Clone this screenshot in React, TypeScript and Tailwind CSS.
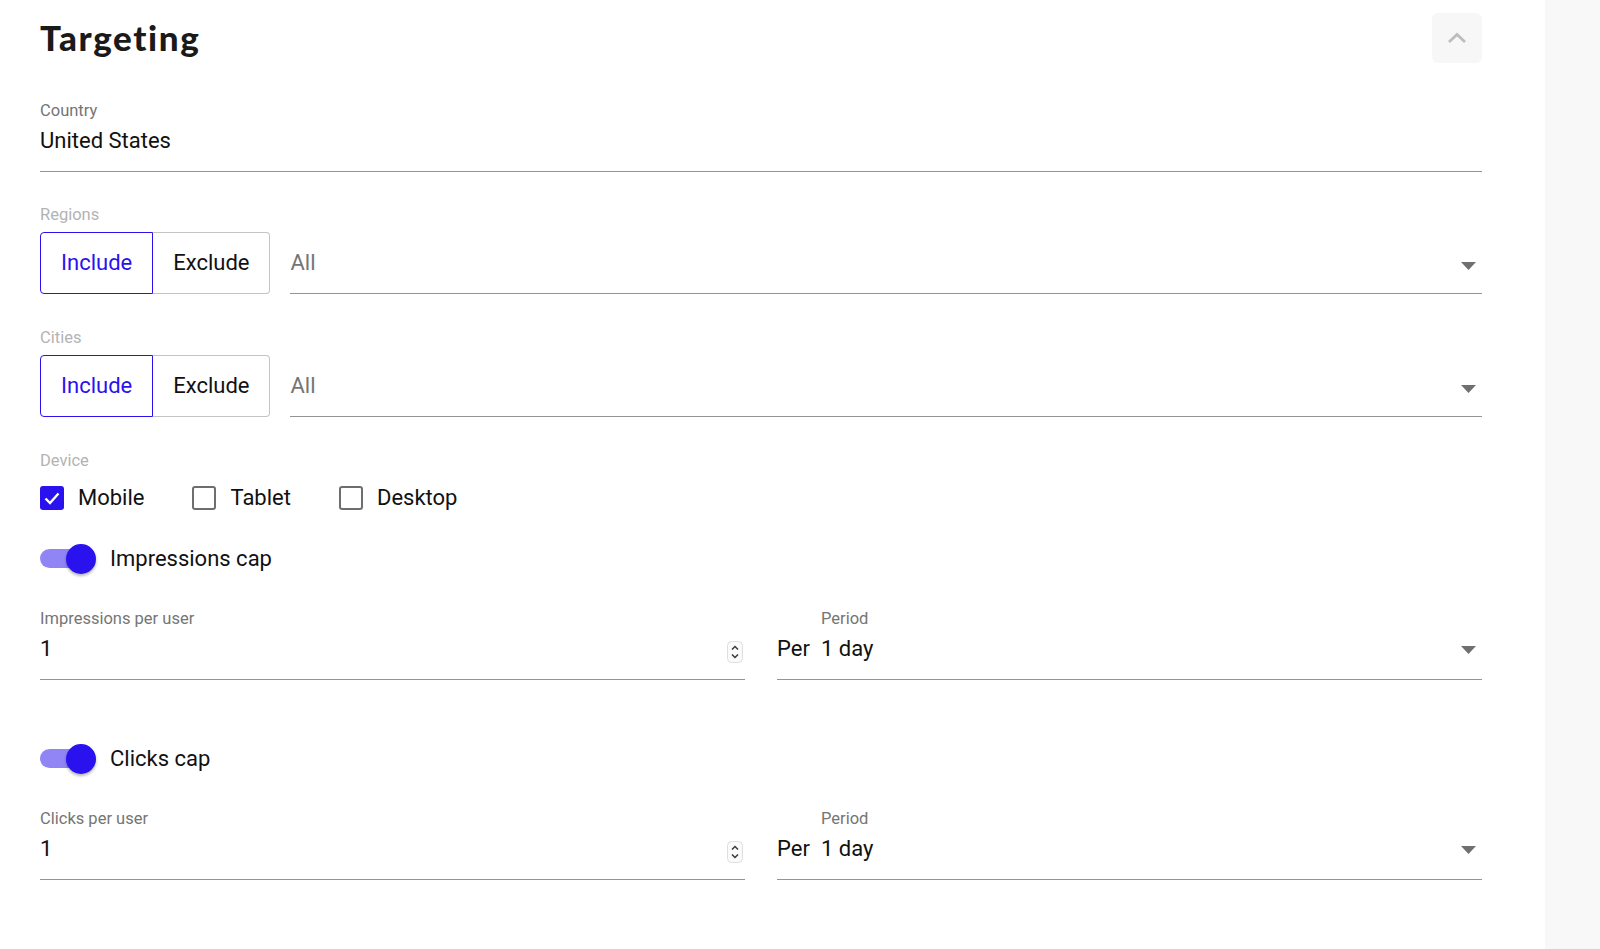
import React from "react";

const PRIMARY_TEXT = "text-[#2a12ef]";

function DropArrow() {
  return (
    <svg width="15" height="8" viewBox="0 0 15 8" className="shrink-0">
      <polygon points="0,0 15,0 7.5,8" fill="#6f6f6f" />
    </svg>
  );
}

function Spinner() {
  return (
    <svg width="16" height="22" viewBox="0 0 16 22" className="shrink-0">
      <rect x="0.5" y="0.5" width="15" height="21" rx="4" fill="#fafafa" stroke="#dedede" />
      <path d="M5 8.5 L8 5.5 L11 8.5" fill="none" stroke="#333" strokeWidth="1.4" />
      <path d="M5 13.5 L8 16.5 L11 13.5" fill="none" stroke="#333" strokeWidth="1.4" />
    </svg>
  );
}

function IncludeExclude() {
  return (
    <div className="flex mt-[8px] items-end">
      <div className="flex shrink-0">
        <div className={`border border-[#2a12ef] rounded-l-[4px] px-[20px] py-[17px] text-[22px] leading-[26px] ${PRIMARY_TEXT}`}>
          Include
        </div>
        <div className="border border-l-0 border-[#c4c4c4] rounded-r-[4px] px-[20px] py-[17px] text-[22px] leading-[26px] text-[#111]">
          Exclude
        </div>
      </div>
      <div className="flex-1 ml-[20px] h-[62px] border-b border-[#949494] flex items-center justify-between">
        <span className="text-[22px] leading-[26px] text-[#757575]">All</span>
        <span className="mr-[6px] mt-[6px] flex">
          <DropArrow />
        </span>
      </div>
    </div>
  );
}

function Checkbox({ checked, label }: { checked: boolean; label: string }) {
  return (
    <div className="flex items-center gap-[14px]">
      {checked ? (
        <div className="w-[24px] h-[24px] rounded-[3px] bg-[#2a12ef] flex items-center justify-center">
          <svg width="24" height="24" viewBox="0 0 24 24">
            <path d="M5.5 12.5 L10 17 L18.5 7.5" fill="none" stroke="#fff" strokeWidth="2.4" />
          </svg>
        </div>
      ) : (
        <div className="w-[24px] h-[24px] rounded-[3px] border-[2.5px] border-[#6e6e6e] bg-white" />
      )}
      <span className="text-[22px] leading-[26px] text-[#111]">{label}</span>
    </div>
  );
}

function Switch({ label }: { label: string }) {
  return (
    <div className="flex items-center gap-[13px]">
      <div className="relative w-[57px] h-[30px] shrink-0">
        <div className="absolute left-0 top-[5.5px] w-[51px] h-[19px] rounded-full bg-[#9185f6]" />
        <div className="absolute left-[26px] top-0 w-[30px] h-[30px] rounded-full bg-[#2a12ef] shadow-[0_2px_3px_rgba(0,0,0,0.3)]" />
      </div>
      <span className="text-[22px] leading-[26px] text-[#111]">{label}</span>
    </div>
  );
}

function NumberField({ label, value }: { label: string; value: string }) {
  return (
    <div className="border-b border-[#949494] pb-[17px]">
      <div className="text-[16.5px] leading-[19px] text-[#757575]">{label}</div>
      <div className="mt-[8px] h-[26px] flex items-center justify-between">
        <span className="text-[22px] leading-[26px] text-[#111]">{value}</span>
        <span className="mr-[2px] mt-[6px] flex">
          <Spinner />
        </span>
      </div>
    </div>
  );
}

function PeriodField() {
  return (
    <div className="border-b border-[#949494] pb-[17px]">
      <div className="ml-[44px] text-[16.5px] leading-[19px] text-[#757575]">Period</div>
      <div className="mt-[8px] h-[26px] flex items-center justify-between">
        <div className="flex text-[22px] leading-[26px] text-[#111]">
          <span className="w-[44px]">Per</span>
          <span>1 day</span>
        </div>
        <span className="mr-[6px] mt-[2px] flex">
          <DropArrow />
        </span>
      </div>
    </div>
  );
}

export default function App() {
  return (
    <div className="flex min-h-[949px] bg-white font-['Roboto',sans-serif]">
      <div className="w-[1545px] shrink-0 pl-[40px] pr-[63px]">
        <div className="flex items-center justify-between pt-[13px]">
          <h1 className="font-['Lato',sans-serif] font-black text-[35px] leading-[40px] -mt-[2px] text-[#1a1a1a] tracking-[1.6px]">
            Targeting
          </h1>
          <div className="w-[50px] h-[50px] rounded-[6px] bg-[#f7f7f7] flex items-center justify-center">
            <svg width="20" height="12" viewBox="0 0 20 12">
              <path d="M2 10 L10 2.5 L18 10" fill="none" stroke="#bdbdbd" strokeWidth="2.8" />
            </svg>
          </div>
        </div>

        <div className="mt-[38px] border-b border-[#949494] pb-[17px]">
          <div className="text-[16.5px] leading-[19px] text-[#757575]">Country</div>
          <div className="mt-[8px] text-[22px] leading-[26px] text-[#111]">United States</div>
        </div>

        <div className="mt-[33px]">
          <div className="text-[16.5px] leading-[19px] text-[#b3b3b3]">Regions</div>
          <IncludeExclude />
        </div>

        <div className="mt-[34px]">
          <div className="text-[16.5px] leading-[19px] text-[#b3b3b3]">Cities</div>
          <IncludeExclude />
        </div>

        <div className="mt-[34px]">
          <div className="text-[16.5px] leading-[19px] text-[#b3b3b3]">Device</div>
          <div className="mt-[14.5px] flex items-center gap-[48px]">
            <Checkbox checked label="Mobile" />
            <Checkbox checked={false} label="Tablet" />
            <Checkbox checked={false} label="Desktop" />
          </div>
        </div>

        <div className="mt-[33px]">
          <Switch label="Impressions cap" />
        </div>

        <div className="mt-[35px] grid grid-cols-2 gap-[32px]">
          <NumberField label="Impressions per user" value="1" />
          <PeriodField />
        </div>

        <div className="mt-[64px]">
          <Switch label="Clicks cap" />
        </div>

        <div className="mt-[35px] grid grid-cols-2 gap-[32px]">
          <NumberField label="Clicks per user" value="1" />
          <PeriodField />
        </div>
      </div>
      <div className="flex-1 bg-[#f8f8f8]" />
    </div>
  );
}
